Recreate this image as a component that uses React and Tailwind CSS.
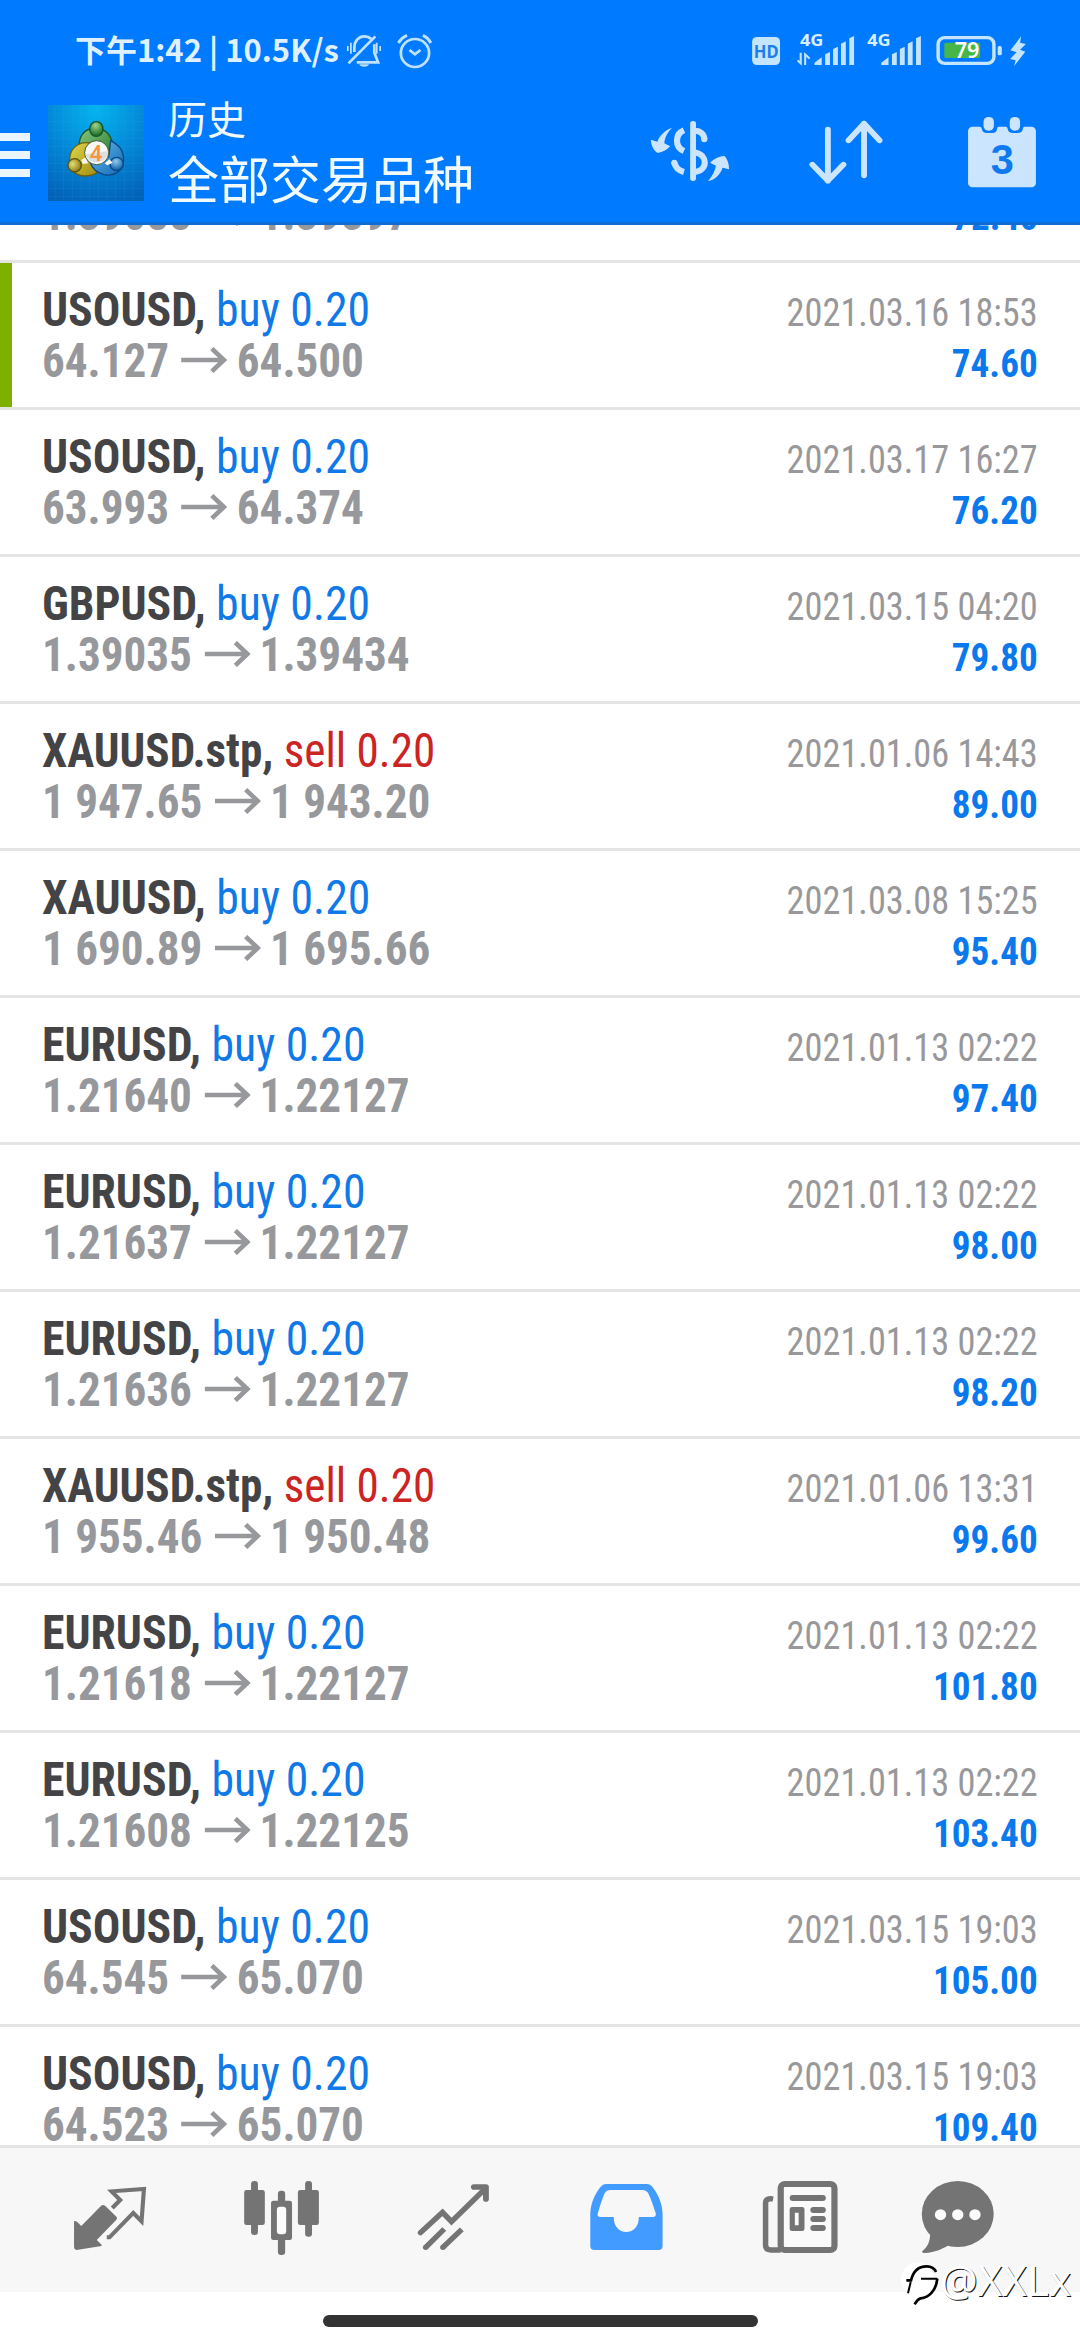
const deals = [
  { symbol: "USOUSD", side: "buy", volume: "0.20", open: "64.127", close: "64.500", time: "2021.03.16 18:53", profit: "74.60", marked: true },
  { symbol: "USOUSD", side: "buy", volume: "0.20", open: "63.993", close: "64.374", time: "2021.03.17 16:27", profit: "76.20" },
  { symbol: "GBPUSD", side: "buy", volume: "0.20", open: "1.39035", close: "1.39434", time: "2021.03.15 04:20", profit: "79.80" },
  { symbol: "XAUUSD.stp", side: "sell", volume: "0.20", open: "1 947.65", close: "1 943.20", time: "2021.01.06 14:43", profit: "89.00" },
  { symbol: "XAUUSD", side: "buy", volume: "0.20", open: "1 690.89", close: "1 695.66", time: "2021.03.08 15:25", profit: "95.40" },
  { symbol: "EURUSD", side: "buy", volume: "0.20", open: "1.21640", close: "1.22127", time: "2021.01.13 02:22", profit: "97.40" },
  { symbol: "EURUSD", side: "buy", volume: "0.20", open: "1.21637", close: "1.22127", time: "2021.01.13 02:22", profit: "98.00" },
  { symbol: "EURUSD", side: "buy", volume: "0.20", open: "1.21636", close: "1.22127", time: "2021.01.13 02:22", profit: "98.20" },
  { symbol: "XAUUSD.stp", side: "sell", volume: "0.20", open: "1 955.46", close: "1 950.48", time: "2021.01.06 13:31", profit: "99.60" },
  { symbol: "EURUSD", side: "buy", volume: "0.20", open: "1.21618", close: "1.22127", time: "2021.01.13 02:22", profit: "101.80" },
  { symbol: "EURUSD", side: "buy", volume: "0.20", open: "1.21608", close: "1.22125", time: "2021.01.13 02:22", profit: "103.40" },
  { symbol: "USOUSD", side: "buy", volume: "0.20", open: "64.545", close: "65.070", time: "2021.03.15 19:03", profit: "105.00" },
  { symbol: "USOUSD", side: "buy", volume: "0.20", open: "64.523", close: "65.070", time: "2021.03.15 19:03", profit: "109.40" },
];

function SignalBars({ x }) {
  return (
    <g transform={`translate(${x} 0)`}>
      <path d="M0 195V188L21 172V195Z M31 195V163L45 156V195Z M54 195V147L68 140V195Z M77 195V131L91 124V195Z M101 195V115L115 108V195Z" />
    </g>
  );
}

function StatusBar() {
  return (
    <div className="flex h-[90px]">
      <div className="w-[344px] shrink-0 whitespace-nowrap pl-[75px] pt-[29px] font-['Noto_Sans_CJK_SC',sans-serif] text-[31px] font-bold leading-[40px] text-[#dff0ff]">
        下午1:42 | 10.5K/s
      </div>
      <svg className="h-[90px] w-[196px] shrink-0" viewBox="999 0 569 270" preserveAspectRatio="none" fill="none" stroke="#bfe3ff" strokeWidth="8">
        <path d="M1012 190L1090 109" />
        <path d="M1029 156V143C1029 122 1043 109 1057 109C1066 109 1073 112 1078 117M1087 133V158L1098 187H1036" />
        <path d="M1043 193H1072C1068 203 1047 203 1043 193Z" fill="#bfe3ff" stroke="none" />
        <path d="M1010 138V153M1019 128V161M1094 128V161M1104 138V153" strokeWidth="5" />
        <ellipse cx="1205" cy="159" rx="41" ry="42" />
        <path d="M1189 150L1205 163L1221 150" />
        <path d="M1157 129Q1166 113 1182 106M1228 106Q1243 113 1251 129" strokeWidth="9" />
      </svg>
      <svg className="h-[90px] w-[540px] shrink-0" viewBox="0 0 1568 270" preserveAspectRatio="none" fill="#c5e5ff" fontFamily="Noto Sans, sans-serif">
        <rect x="616" y="111" width="81" height="84" rx="14" />
        <text x="621" y="175" fontSize="53" fontWeight="700" fill="#1b7eea" textLength="72" lengthAdjust="spacingAndGlyphs">HD</text>
        <text x="755" y="138" fontSize="47" fontWeight="700" fill="#d9eeff" textLength="68" lengthAdjust="spacingAndGlyphs">4G</text>
        <path d="M757 158V190L748 181M770 195V163L783 176" fill="none" stroke="#c5e5ff" strokeWidth="6" />
        <SignalBars x="797" />
        <text x="950" y="138" fontSize="47" fontWeight="700" fill="#d9eeff" textLength="68" lengthAdjust="spacingAndGlyphs">4G</text>
        <SignalBars x="991" />
        <rect x="1156" y="113" width="162" height="77" rx="19" fill="none" stroke="#c5e5ff" strokeWidth="10" />
        <rect x="1329" y="138" width="12" height="28" rx="5" />
        <rect x="1174" y="128" width="104" height="46" rx="5" fill="#46b648" />
        <text x="1204" y="174" fontSize="66" fontWeight="600" fill="#ffffff" textLength="72" lengthAdjust="spacingAndGlyphs">79</text>
        <path d="M1397 109L1366 151L1384 157L1365 177L1381 181L1377 198L1409 155L1394 149L1411 132L1394 128Z" />
      </svg>
    </div>
  );
}

function AppLogo() {
  return (
    <svg className="ml-[18px] mt-[15px] h-[96px] w-[96px] shrink-0" viewBox="24 15 288 288">
      <defs>
        <radialGradient id="tile" cx="0.5" cy="0.05" r="1">
          <stop offset="0" stopColor="#04b4ee" />
          <stop offset="0.5" stopColor="#0488d8" />
          <stop offset="1" stopColor="#0262b8" />
        </radialGradient>
        <linearGradient id="leafGreen" x1="0" y1="0" x2="1" y2="1">
          <stop offset="0" stopColor="#8cc47c" />
          <stop offset="1" stopColor="#1c7a2c" />
        </linearGradient>
        <linearGradient id="leafYellow" x1="0" y1="0" x2="1" y2="1">
          <stop offset="0" stopColor="#e2d84e" />
          <stop offset="1" stopColor="#a08c0c" />
        </linearGradient>
        <linearGradient id="leafBlue" x1="0" y1="0" x2="1" y2="1">
          <stop offset="0" stopColor="#6cbaea" />
          <stop offset="1" stopColor="#0d68b4" />
        </linearGradient>
        <radialGradient id="ballGreen" cx="0.45" cy="0.25" r="0.7">
          <stop offset="0" stopColor="#a0d488" />
          <stop offset="1" stopColor="#1c6e28" />
        </radialGradient>
        <radialGradient id="ballYellow" cx="0.35" cy="0.4" r="0.7">
          <stop offset="0" stopColor="#e6dc78" />
          <stop offset="1" stopColor="#857408" />
        </radialGradient>
        <radialGradient id="ballBlue" cx="0.45" cy="0.3" r="0.7">
          <stop offset="0" stopColor="#8cccf2" />
          <stop offset="1" stopColor="#0c5a9e" />
        </radialGradient>
      </defs>
      <rect x="24" y="15" width="288" height="288" fill="url(#tile)" />
      <path d="M45 15V303M71 15V303M97 15V303M123 15V303M149 15V303M175 15V303M201 15V303M227 15V303M253 15V303M279 15V303M24 40H312M24 65H312M24 90H312M24 115H312M24 140H312M24 165H312M24 190H312M24 215H312M24 240H312M24 265H312M24 290H312" stroke="#5cc4f4" strokeOpacity="0.2" strokeWidth="1.5" />
      <g strokeWidth="4">
        <path d="M118 138C116 104 138 84 168 84C200 86 220 112 218 146C216 166 208 178 198 186L170 124Z" fill="url(#leafGreen)" stroke="#12562a" />
        <path d="M158 132C124 120 96 138 90 168C84 202 100 226 134 228C150 228 162 224 172 218L138 168Z" fill="url(#leafYellow)" stroke="#6c620c" />
        <path d="M212 122C240 136 254 160 250 188C246 216 220 230 192 224C170 218 156 204 150 186L206 170Z" fill="url(#leafBlue)" stroke="#0a4a88" />
        <ellipse cx="169" cy="87" rx="20" ry="22" fill="url(#ballGreen)" stroke="#12562a" />
        <circle cx="104" cy="196" r="20" fill="url(#ballYellow)" stroke="#5c540c" />
        <circle cx="230" cy="192" r="20" fill="url(#ballBlue)" stroke="#0a4a88" />
      </g>
      <path d="M124 180l14-10 6 20-16 2zM194 190l14-12 10 10-16 8z" fill="#f4f4e8" />
      <circle cx="170" cy="158" r="36" fill="#f8f8f8" stroke="#3f5c40" strokeWidth="3" />
      <path d="M135 163L205 153A36 36 0 0 1 135 163Z" fill="#dedede" />
      <text x="168" y="182" textAnchor="middle" fontFamily="Noto Sans, sans-serif" fontSize="64" fontWeight="600" fill="#f6953a">4</text>
    </svg>
  );
}

function Toolbar() {
  return (
    <div className="flex h-[132px]">
      <div className="mt-[43px] flex w-[30px] shrink-0 flex-col gap-[10px]">
        <div className="h-2 bg-[#eaf6ff]" />
        <div className="h-2 bg-[#eaf6ff]" />
        <div className="h-2 bg-[#eaf6ff]" />
      </div>
      <AppLogo />
      <div className="ml-[24px] mt-[5px] w-[372px] shrink-0 font-['Noto_Sans_CJK_SC',sans-serif] font-normal text-[#f0faff]">
        <div className="text-[39px] leading-[44px]">历史</div>
        <div className="mt-[8px] text-[51px] leading-[60px]">全部交易品种</div>
      </div>
      <svg className="h-[132px] w-[200px] shrink-0" viewBox="0 270 580.8 396" preserveAspectRatio="none" fill="#cce5ff">
        <rect x="436" y="363" width="17" height="180" rx="8" />
        <path d="M418 391C391 403 391 441 418 453M450 392C466 392 477 404 477 417M450 457C488 464 488 511 450 516" fill="none" stroke="#cce5ff" strokeWidth="18" />
        <path d="M390 488C393 502 404 512 418 516" fill="none" stroke="#cce5ff" strokeWidth="18" />
        <circle cx="390" cy="488" r="9" />
        <circle cx="477" cy="418" r="9" />
        <path d="M383 384C365 388 345 410 341 425L322 419C322 435 330 452 342 459C357 457 370 448 378 439L361 430C362 412 372 395 383 384Z" />
        <path d="M488 543C508 540 526 520 530 503L549 508C549 492 545 478 536 468C520 469 505 476 494 488L511 497C508 513 500 530 488 543Z" />
      </svg>
      <svg className="h-[132px] w-[180px] shrink-0" viewBox="580.8 270 522.7 396" preserveAspectRatio="none" fill="none" stroke="#cce5ff" strokeWidth="17" strokeLinecap="round" strokeLinejoin="round">
        <path d="M836 389V542M791 494L836 542L881 494M941 526V371M896 421L941 371L986 421" />
      </svg>
      <svg className="h-[132px] w-[160px] shrink-0" viewBox="1103.5 270 464.5 396" preserveAspectRatio="none" fill="#cce5ff">
        <rect x="1243" y="380" width="197" height="182" rx="13" />
        <path d="M1276 378Q1283 383 1283 387Q1285 399 1298 399H1313Q1326 399 1327 387Q1327 383 1333 378ZM1352 378Q1358 383 1358 387Q1360 399 1373 399H1387Q1400 399 1402 387Q1402 383 1408 378Z" fill="#007aff" />
        <rect x="1288" y="351" width="30" height="41" rx="14" />
        <rect x="1364" y="351" width="30" height="41" rx="14" />
        <text x="1309" y="523" fontFamily="Liberation Sans, sans-serif" fontSize="130" fontWeight="700" fill="#0e7af0" textLength="67" lengthAdjust="spacingAndGlyphs">3</text>
      </svg>
    </div>
  );
}

function Prices({ open, close }) {
  return (
    <div className="flex origin-left scale-x-[0.94] items-center text-[48px] font-bold text-[#97989c]">
      <span>{open}</span>
      <svg className="ml-[13px] mr-[10px] mt-[-2px] h-[26px] w-[49px]" viewBox="0 0 138 78" preserveAspectRatio="none" fill="none" stroke="#97989c" strokeWidth="14">
        <path d="M0 39H128M92 5L128 39L92 73" />
      </svg>
      <span>{close}</span>
    </div>
  );
}

function DealRow({ deal }) {
  const sell = deal.side === "sell";
  return (
    <div className="flex h-[147px] shrink-0 border-t-[3px] border-[#e4e4e4]">
      <div className={deal.marked ? "w-[12px] shrink-0 bg-[#7eb000]" : "w-[12px] shrink-0"} />
      <div className="flex flex-1 justify-between whitespace-nowrap pl-[30px] pr-[42px] font-['Roboto_Condensed',Roboto,sans-serif] leading-[51px]">
        <div className="pt-[21px]">
          <div className={sell ? "origin-left scale-x-[0.94] text-[48px]" : "origin-left scale-x-[0.953] text-[48px]"}>
            <span className="font-bold text-[#444446]">{deal.symbol},</span>{" "}
            <span className={sell ? "text-[#cc2323]" : "text-[#1079e8]"}>
              {deal.side} {deal.volume}
            </span>
          </div>
          <Prices open={deal.open} close={deal.close} />
        </div>
        <div className="pt-[25px] text-right text-[39px]">
          <div className="origin-right scale-x-[0.931] text-[#98989b]">{deal.time}</div>
          <div className="origin-right scale-x-[0.952] font-bold text-[#0a79ee]">{deal.profit}</div>
        </div>
      </div>
    </div>
  );
}

/* Tail of the row that is scrolled under the header. */
function ScrolledRow() {
  return (
    <div className="flex h-[35px] shrink-0 items-end justify-between whitespace-nowrap pb-[21px] pl-[42px] pr-[42px] font-['Roboto_Condensed',Roboto,sans-serif] leading-[51px]">
      <div className="h-[51px]">
        <Prices open="1.39088" close="1.39397" />
      </div>
      <div className="h-[47px] origin-right scale-x-[0.952] text-[39px] font-bold text-[#0a79ee]">72.40</div>
    </div>
  );
}

function NavIcon({ x, children }) {
  return (
    <svg className="h-[144px] w-[180px]" viewBox={`${x} 144 522.67 432`} preserveAspectRatio="none" fill="#747474">
      {children}
    </svg>
  );
}

function BottomNav() {
  return (
    <nav className="flex h-[147px] border-t-[3px] border-[#e4e4e4] bg-[#f7f7f7]">
      <NavIcon x={0}>
        <path d="M293 318Q299 312 306 318L338 350Q342 355 338 359L281 420L295 434V438L222 450Q215 449 215 441V363Q220 362 225 367L236 378Z" />
        <path d="M326 324L349 300L324 274L418 267L411 364L387 339L318 412L310 412" fill="none" stroke="#747474" strokeWidth="12" />
      </NavIcon>
      <NavIcon x={522.67}>
        <rect x="709" y="270" width="60" height="105" rx="7" />
        <rect x="729" y="243" width="20" height="162" rx="9" />
        <rect x="865" y="270" width="61" height="105" rx="7" />
        <rect x="886" y="243" width="20" height="167" rx="9" />
        <rect x="807" y="272" width="21" height="193" rx="9" />
        <rect x="787" y="302" width="61" height="118" rx="7" />
        <rect x="804" y="320" width="27" height="83" rx="9" fill="#fbfbfb" />
      </NavIcon>
      <NavIcon x={1045.33}>
        <path d="M1221 398L1285 337L1311 365L1404 271" fill="none" stroke="#747474" strokeWidth="16" strokeLinecap="round" />
        <path d="M1376 261H1411V297" fill="none" stroke="#747474" strokeWidth="17" strokeLinecap="round" strokeLinejoin="round" />
        <path d="M1236 442L1290 387M1286 442L1341 388" fill="none" stroke="#747474" strokeWidth="16" />
        <circle cx="1236" cy="442" r="8" />
        <circle cx="1286" cy="442" r="8" />
      </NavIcon>
      <NavIcon x={0}>
        <path
          fill="#429bff"
          fillRule="evenodd"
          d="M191 252H310Q320 252 327 262C345 285 356 315 356 345V437Q356 450 344 450H158Q146 450 146 437V345C146 315 157 285 175 262Q182 252 191 252ZM205 270H297Q308 270 314 279C322 296 329 318 336 340Q338 351 328 351H287C287 380 272 396 250 396C230 396 214 380 214 351H174Q165 350 168 340C174 318 181 296 188 279Q193 270 205 270Z"
        />
      </NavIcon>
      <NavIcon x={522.67}>
        <path d="M677 297Q655 293 655 310V436Q655 450 670 450H699" fill="none" stroke="#747474" strokeWidth="16" />
        <rect x="699" y="252" width="156" height="198" rx="12" fill="#fafafa" stroke="#747474" strokeWidth="18" />
        <rect x="725" y="285" width="105" height="18" rx="9" />
        <path fillRule="evenodd" d="M732 321H761Q768 321 768 328V386Q768 393 761 393H732Q725 393 725 386V328Q725 321 732 321ZM740 338V376H751V338Z" />
        <rect x="785" y="321" width="45" height="18" rx="9" />
        <rect x="785" y="348" width="45" height="18" rx="9" />
        <rect x="785" y="375" width="45" height="18" rx="9" />
      </NavIcon>
      <NavIcon x={1045.33}>
        <ellipse cx="1213" cy="342" rx="104.500" ry="99" />
        <path d="M1133 400C1133 430 1122 443 1109 455Q1110 460 1120 459C1140 458 1165 450 1186 436Z" />
        <circle cx="1163" cy="344" r="16.500" fill="#fcfcfc" />
        <circle cx="1213" cy="344" r="16.500" fill="#fcfcfc" />
        <circle cx="1263" cy="344" r="16.500" fill="#fcfcfc" />
      </NavIcon>
    </nav>
  );
}

function Watermark() {
  return (
    <div className="absolute left-[898px] top-[2257px] flex w-[182px]">
      <svg className="h-[52px] w-[42px] shrink-0" viewBox="54 21 126 156" fill="none">
        <circle cx="113" cy="88" r="50" fill="#ffffff" />
        <path d="M79 91H93C100 62 118 49 140 49C154 49 164 56 168 66" stroke="#000000" strokeWidth="8" />
        <path d="M92 96L84 130M123 86H172" stroke="#000000" strokeWidth="6" />
        <path d="M172 86C168 124 146 142 122 145C112 148 108 156 104 163" stroke="#000000" strokeWidth="8" />
      </svg>
      <span className="-mt-[3px] h-[52px] whitespace-nowrap font-['Noto_Sans',sans-serif] text-[42px] font-normal leading-[52px] text-white [text-shadow:1px_1px_0_#111]">@XXLx</span>
    </div>
  );
}

export default function App() {
  return (
    <div className="relative flex h-[2340px] w-[1080px] flex-col overflow-hidden bg-white">
      <header className="z-10 h-[225px] shrink-0 border-b-[3px] border-[#0f6cd2] bg-[#007aff]">
        <StatusBar />
        <Toolbar />
      </header>
      <main className="flex h-[1920px] shrink-0 flex-col overflow-hidden">
        <ScrolledRow />
        {deals.map((deal, i) => (
          <DealRow key={i} deal={deal} />
        ))}
      </main>
      <BottomNav />
      <div className="mt-[23px] h-[12px] w-[435px] self-center rounded-full bg-[#333333]" />
      <Watermark />
    </div>
  );
}
